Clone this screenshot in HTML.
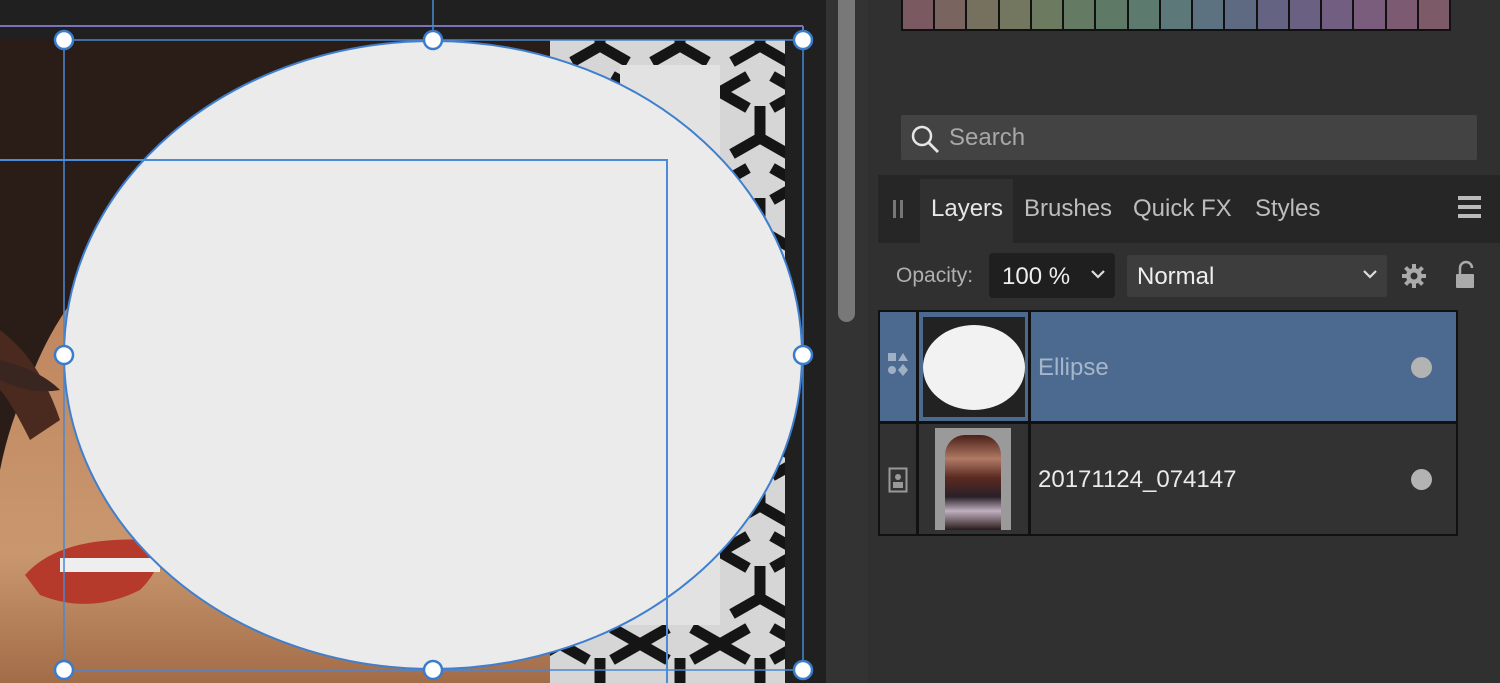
<!DOCTYPE html>
<html><head><meta charset="utf-8"><style>
*{margin:0;padding:0;box-sizing:border-box}
body{width:1500px;height:683px;overflow:hidden;background:#2f2f2f;font-family:"Liberation Sans",sans-serif;position:relative}
.abs{position:absolute}
.t{color:#cfcfcf;font-size:24px;position:absolute}
</style></head><body>
<div class="abs" style="left:0;top:0;width:826px;height:683px;background:#202020"></div>
<svg class="abs" style="left:0;top:0" width="826" height="683">
<defs>
<pattern id="pt" width="80" height="92" patternUnits="userSpaceOnUse">
<rect width="80" height="92" fill="#d6d6d6"/>
<path d="M40 46 L40 14 M40 46 L12 62 M40 46 L68 62" stroke="#151515" stroke-width="11"/>
<path d="M80 0 L52 16 M80 92 L52 76 M0 92 L28 76 M0 0 L28 16" stroke="#151515" stroke-width="11"/>
</pattern>
<linearGradient id="skin" x1="0" y1="0" x2="0" y2="1">
<stop offset="0" stop-color="#b07550"/><stop offset="0.5" stop-color="#c28a62"/><stop offset="0.8" stop-color="#c9976e"/><stop offset="1" stop-color="#a26c48"/>
</linearGradient>
</defs>
<rect x="0" y="40" width="785" height="643" fill="url(#skin)"/>
<path d="M0 40 H560 V150 Q300 150 120 250 Q60 300 30 380 Q10 420 0 470Z" fill="#2a1d18"/>
<path d="M0 330 Q40 360 60 420 L30 440 Q10 400 0 390Z" fill="#4a2a1e"/>
<rect x="550" y="40" width="235" height="643" fill="url(#pt)"/>
<rect x="620" y="65" width="100" height="560" fill="#e2e2e2"/>
<path d="M25 575 Q60 535 150 540 Q170 560 140 590 Q90 615 40 595Z" fill="#b53a2c"/>
<rect x="60" y="558" width="100" height="14" fill="#eee"/>
<path d="M0 360 Q40 370 60 390 Q30 395 0 380Z" fill="#3a2620"/>
<line x1="0" y1="26" x2="803" y2="26" stroke="#7a72b8" stroke-width="2"/>
<line x1="803" y1="26" x2="803" y2="40" stroke="#7a72b8" stroke-width="2"/>
<line x1="433" y1="0" x2="433" y2="40" stroke="#4a8ad6" stroke-width="1.5"/>
<ellipse cx="433" cy="355" rx="369" ry="314" fill="#ebebeb" stroke="#3f7fce" stroke-width="2"/>
<rect x="64" y="40" width="739" height="630" fill="none" stroke="#4a86d0" stroke-width="1.5"/>
<path d="M0 160 H667 V683" fill="none" stroke="#4a8ad6" stroke-width="2"/>
<g fill="#fff" stroke="#3a7ccc" stroke-width="2.5">
<circle cx="64" cy="40" r="9"/><circle cx="433" cy="40" r="9"/><circle cx="803" cy="40" r="9"/>
<circle cx="64" cy="355" r="9"/><circle cx="803" cy="355" r="9"/>
<circle cx="64" cy="670" r="9"/><circle cx="433" cy="670" r="9"/><circle cx="803" cy="670" r="9"/>
</g>
</svg>
<div class="abs" style="left:826px;top:0;width:42px;height:683px;background:#333"></div>
<div class="abs" style="left:838px;top:0;width:17px;height:322px;background:#787878;border-radius:0 0 9px 9px"></div>
<div class="abs" style="left:868px;top:0;width:632px;height:683px;background:#303030"></div>
<div class="abs" style="left:901px;top:0;width:550px;height:31px;background:#111;display:flex;gap:2px;padding:0 2px 2px 2px">
<div style="flex:1;background:#7a5a60"></div><div style="flex:1;background:#7a6460"></div><div style="flex:1;background:#76705f"></div><div style="flex:1;background:#737760"></div><div style="flex:1;background:#6c7a60"></div><div style="flex:1;background:#647a62"></div><div style="flex:1;background:#5e7a66"></div><div style="flex:1;background:#5c7a6e"></div><div style="flex:1;background:#5c7878"></div><div style="flex:1;background:#5c7280"></div><div style="flex:1;background:#5e6a82"></div><div style="flex:1;background:#646482"></div><div style="flex:1;background:#6a6082"></div><div style="flex:1;background:#725e80"></div><div style="flex:1;background:#7a5c7c"></div><div style="flex:1;background:#7c5a72"></div><div style="flex:1;background:#7c5a68"></div>
</div>
<div class="abs" style="left:901px;top:115px;width:576px;height:45px;background:#434343;border-radius:2px"></div>
<svg class="abs" style="left:908px;top:122px" width="34" height="34"><circle cx="14" cy="14" r="9" fill="none" stroke="#e6e6e6" stroke-width="2.5"/><line x1="20.5" y1="20.5" x2="30" y2="30" stroke="#e6e6e6" stroke-width="2.8"/></svg>
<div class="t" style="left:949px;top:124px;color:#a8a8a8">Search</div>
<div class="abs" style="left:878px;top:175px;width:622px;height:68px;background:#262626"></div>
<div class="abs" style="left:920px;top:179px;width:93px;height:64px;background:#303030"></div>
<div class="abs" style="left:893px;top:200px;width:3px;height:18px;background:#777"></div>
<div class="abs" style="left:900px;top:200px;width:3px;height:18px;background:#777"></div>
<div class="t" style="left:931px;top:195px;color:#e6e6e6">Layers</div>
<div class="t" style="left:1024px;top:195px;color:#bdbdbd">Brushes</div>
<div class="t" style="left:1133px;top:195px;color:#bdbdbd">Quick FX</div>
<div class="t" style="left:1255px;top:195px;color:#bdbdbd">Styles</div>
<div class="abs" style="left:1458px;top:196px;width:23px;height:4px;background:#bbb;box-shadow:0 9px 0 #bbb,0 18px 0 #bbb"></div>
<div class="t" style="left:896px;top:264px;font-size:21px;color:#b0b0b0">Opacity:</div>
<div class="abs" style="left:989px;top:253px;width:126px;height:45px;background:#1f1f1f;border-radius:4px"></div>
<div class="t" style="left:1002px;top:263px;color:#eee">100 %</div>
<svg class="abs" style="left:1090px;top:268px" width="16" height="12"><path d="M2 3 L8 9 L14 3" fill="none" stroke="#ddd" stroke-width="2.2"/></svg>
<div class="abs" style="left:1127px;top:255px;width:260px;height:42px;background:#3d3d3d;border-radius:3px"></div>
<div class="t" style="left:1137px;top:263px;color:#eee">Normal</div>
<svg class="abs" style="left:1362px;top:268px" width="16" height="12"><path d="M2 3 L8 9 L14 3" fill="none" stroke="#ddd" stroke-width="2.2"/></svg>
<svg class="abs" style="left:1400px;top:262px" width="28" height="28"><g fill="#aaa"><circle cx="14" cy="14" r="8"/><g stroke="#aaa" stroke-width="4"><line x1="14" y1="2" x2="14" y2="26"/><line x1="2" y1="14" x2="26" y2="14"/><line x1="5.5" y1="5.5" x2="22.5" y2="22.5"/><line x1="22.5" y1="5.5" x2="5.5" y2="22.5"/></g></g><circle cx="14" cy="14" r="3.5" fill="#303030"/></svg>
<svg class="abs" style="left:1454px;top:260px" width="24" height="30"><path d="M6 14 V8 a6 6 0 0 1 12 0" fill="none" stroke="#aaa" stroke-width="2.5"/><rect x="2" y="14" width="18" height="14" rx="1" fill="#aaa"/></svg>
<div class="abs" style="left:878px;top:310px;width:580px;height:226px;background:#111"></div>
<div class="abs" style="left:880px;top:312px;width:36px;height:109px;background:#4c6a8f"></div>
<div class="abs" style="left:919px;top:312px;width:109px;height:109px;background:#4c6a8f"></div>
<div class="abs" style="left:1031px;top:312px;width:425px;height:109px;background:#4c6a8f"></div>
<div class="abs" style="left:923px;top:317px;width:102px;height:100px;background:#222"></div>
<div class="abs" style="left:923px;top:325px;width:102px;height:85px;background:#f2f2f2;border-radius:50%"></div>
<svg class="abs" style="left:886px;top:350px" width="26" height="30"><rect x="2" y="3" width="8" height="8" fill="#9fb0c4"/><path d="M17 3 L22 11 H12Z" fill="#9fb0c4"/><circle cx="6" cy="20" r="4" fill="#9fb0c4"/><path d="M17 14 L22 20 L17 26 L12 20Z" fill="#9fb0c4"/></svg>
<div class="t" style="left:1038px;top:354px;color:#a6b6ca">Ellipse</div>
<div class="abs" style="left:1411px;top:357px;width:21px;height:21px;border-radius:50%;background:#b3b3b3"></div>
<div class="abs" style="left:880px;top:424px;width:36px;height:110px;background:#323232"></div>
<div class="abs" style="left:919px;top:424px;width:109px;height:110px;background:#323232"></div>
<div class="abs" style="left:1031px;top:424px;width:425px;height:110px;background:#323232"></div>
<div class="abs" style="left:935px;top:428px;width:76px;height:102px;background:#9a9a9a"></div>
<div class="abs" style="left:945px;top:435px;width:56px;height:95px;background:linear-gradient(#4a2018 0%,#b07a66 25%,#5a2a20 45%,#2a2028 65%,#c0b0c0 80%,#2a1a1a 100%);border-radius:20px 20px 0 0"></div>
<svg class="abs" style="left:888px;top:467px" width="20" height="26"><rect x="1.5" y="1.5" width="17" height="23" fill="none" stroke="#999" stroke-width="2"/><circle cx="10" cy="10" r="3" fill="#999"/><rect x="5" y="15" width="10" height="6" fill="#999"/></svg>
<div class="t" style="left:1038px;top:466px;color:#eaeaea">20171124_074147</div>
<div class="abs" style="left:1411px;top:469px;width:21px;height:21px;border-radius:50%;background:#b3b3b3"></div>
</body></html>
